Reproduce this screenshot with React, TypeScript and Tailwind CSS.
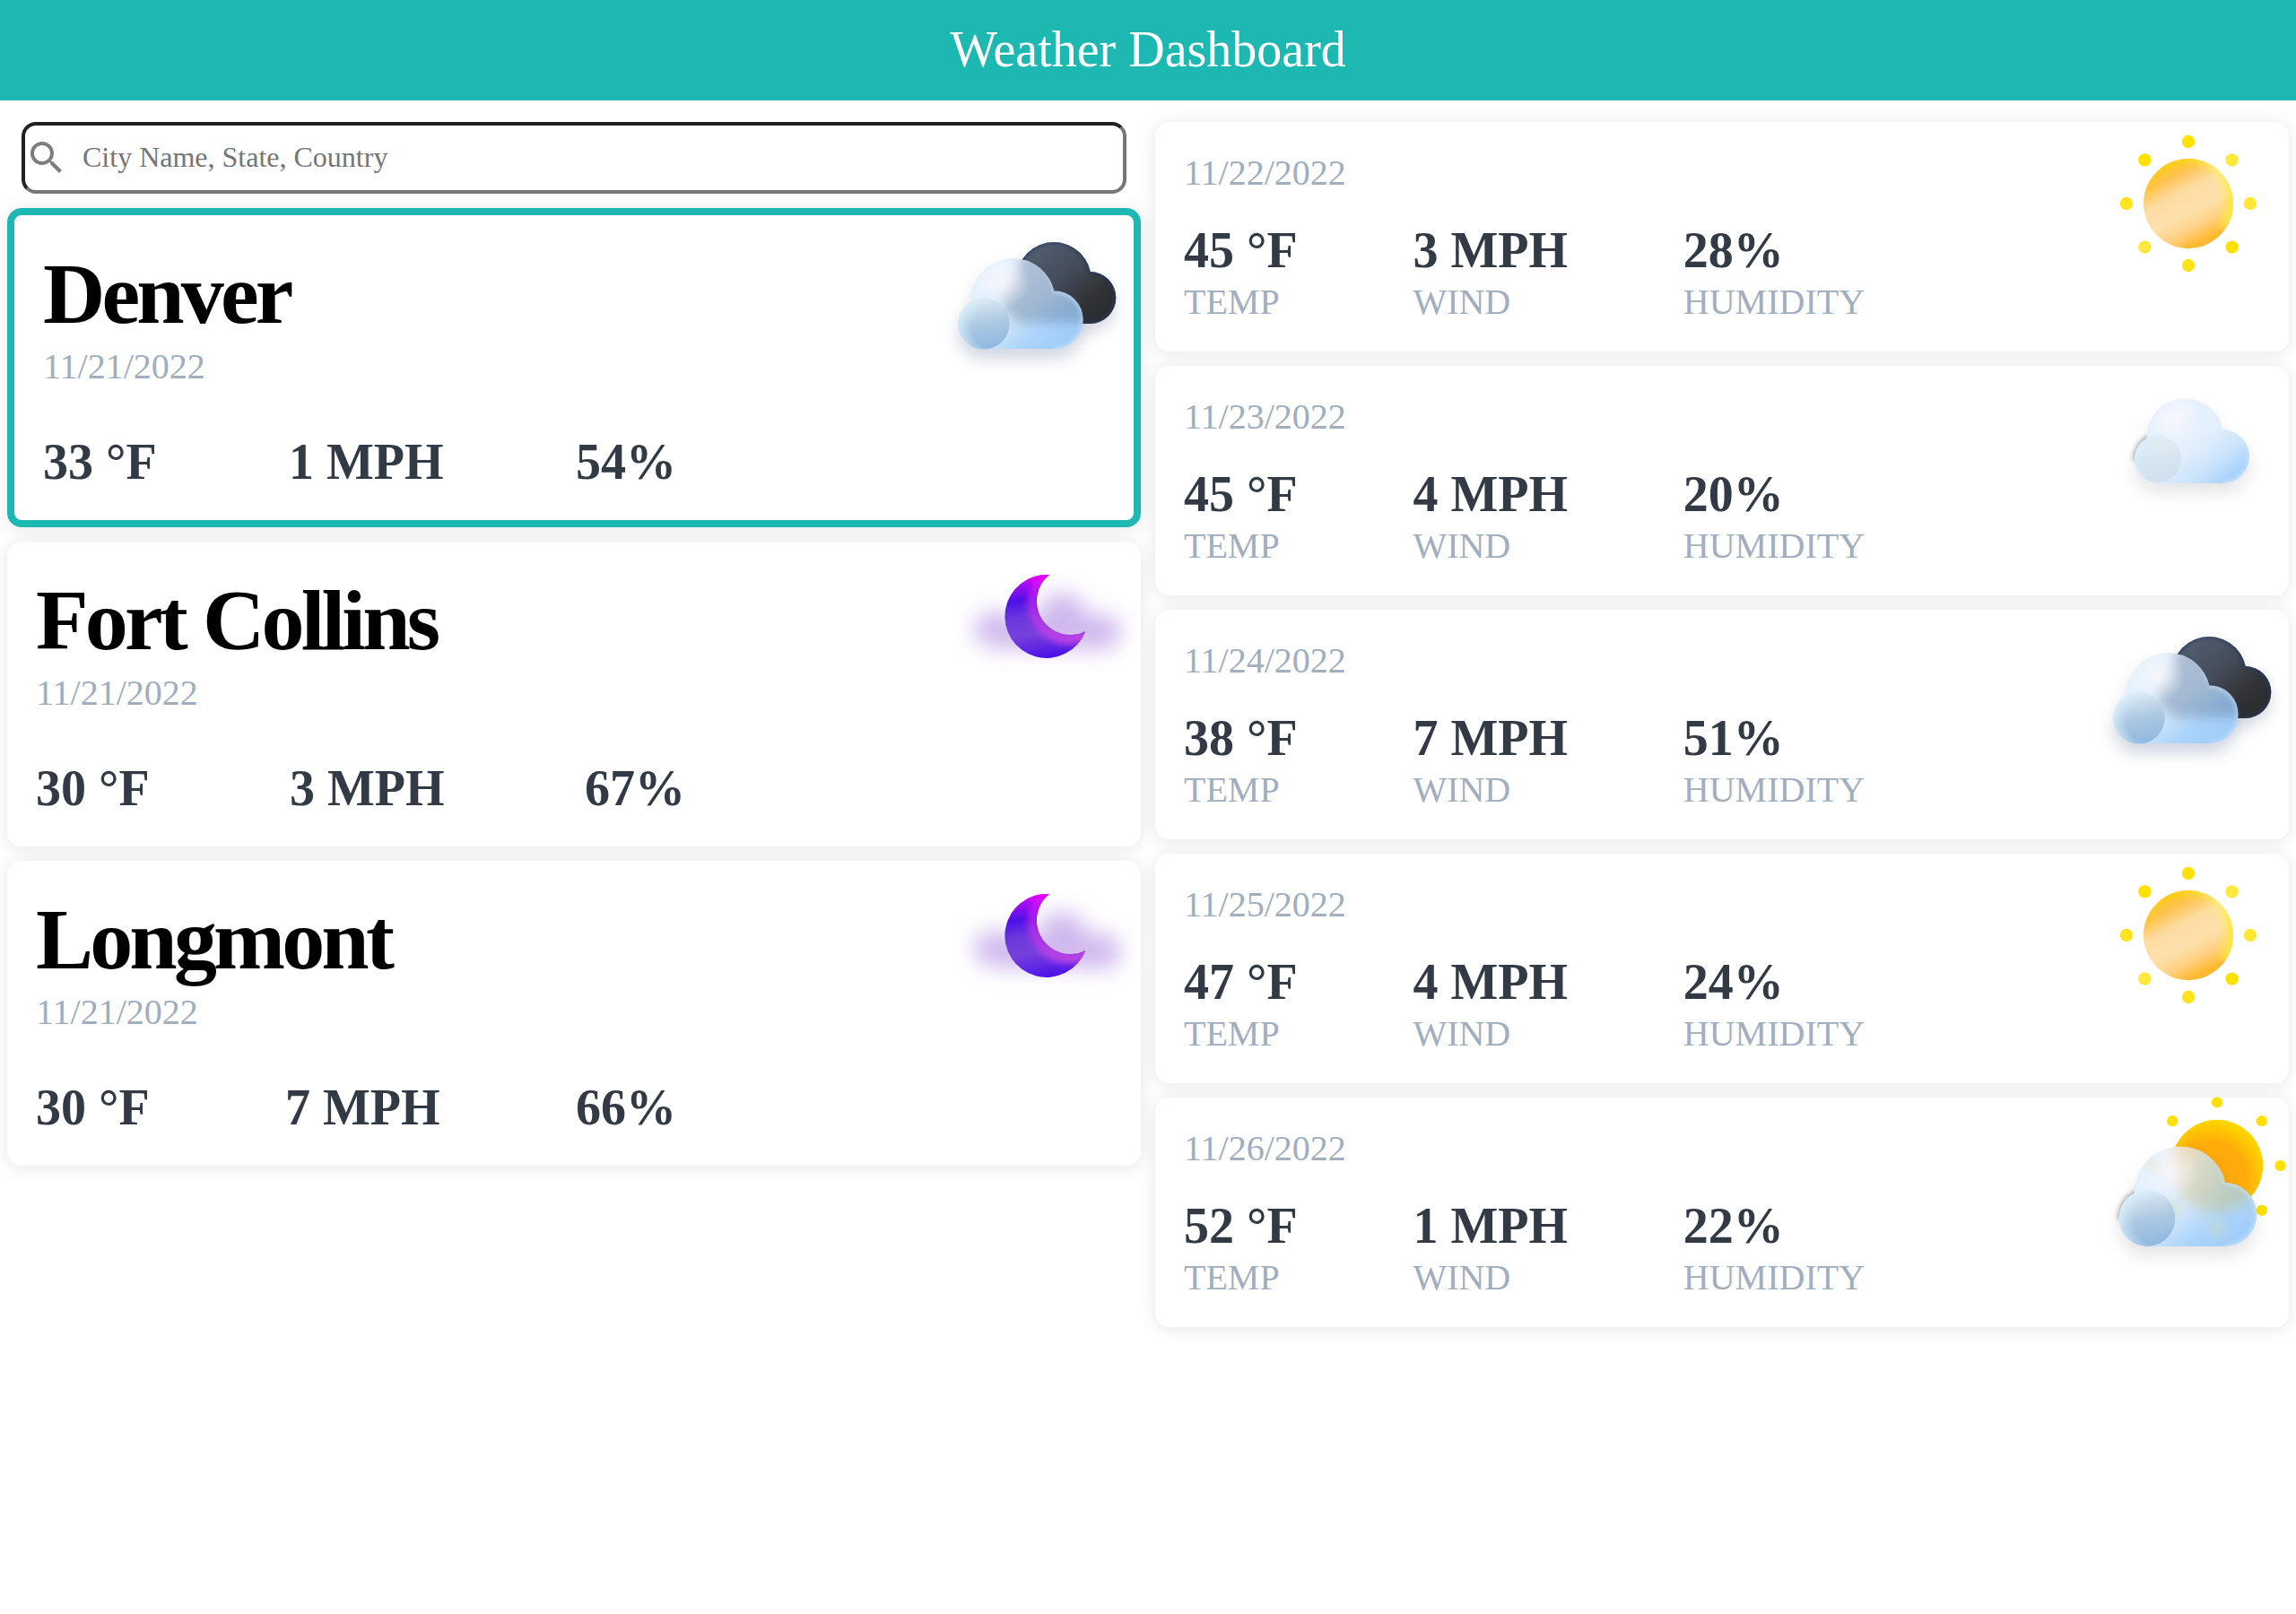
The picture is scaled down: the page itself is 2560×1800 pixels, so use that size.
import { useId, type ReactNode } from "react";
import { MdSearch } from "react-icons/md";

type Circle = [number, number, number];

interface Lobed {
  big: Circle;
  right: Circle;
  left: Circle;
}

function Lobes({ big, right, left, fill }: Lobed & { fill?: string }) {
  const base = right[1] + right[2];
  const top = big[1] + big[2] * 0.35;
  return (
    <>
      <circle cx={big[0]} cy={big[1]} r={big[2]} fill={fill} />
      <circle cx={right[0]} cy={right[1]} r={right[2]} fill={fill} />
      <path d={`M${left[0]} ${base}V${top + 12}L${big[0] - 10} ${top}H${right[0]}V${base}Z`} fill={fill} />
    </>
  );
}

function Icon({ children }: { children: ReactNode }) {
  return (
    <svg viewBox="0 0 200 200" className="absolute top-0 right-0 h-[200px] w-[200px] overflow-visible" aria-hidden="true">
      {children}
    </svg>
  );
}

function Dots({ cx, cy, d, diag, r, colors }: { cx: number; cy: number; d: number; diag: number; r: number; colors: string[] }) {
  const spots = [
    [0, -d],
    [diag, -diag],
    [d, 0],
    [diag, diag],
    [0, d],
    [-diag, diag],
    [-d, 0],
    [-diag, -diag],
  ];
  return (
    <>
      {spots.map(([x, y], i) => (
        <circle key={i} cx={cx + x} cy={cy + y} r={r} fill={colors[i % colors.length]} />
      ))}
    </>
  );
}

function SunIcon() {
  const id = useId();
  return (
    <Icon>
      <defs>
        <linearGradient id={id + "g"} gradientUnits="userSpaceOnUse" x1="62" y1="42" x2="112" y2="138">
          <stop offset="0" stopColor="#ffc51c" />
          <stop offset="0.19" stopColor="#ffc250" />
          <stop offset="0.38" stopColor="#fddca2" />
          <stop offset="0.6" stopColor="#fee0ac" />
          <stop offset="0.76" stopColor="#ffd184" />
          <stop offset="0.92" stopColor="#ffb930" />
        </linearGradient>
        <linearGradient id={id + "r"} gradientUnits="userSpaceOnUse" x1="40" y1="80" x2="138" y2="90">
          <stop offset="0" stopColor="#ffd000" stopOpacity="0.2" />
          <stop offset="0.4" stopColor="#ffd90c" />
          <stop offset="0.8" stopColor="#fff07a" />
          <stop offset="1" stopColor="#ffe63c" />
        </linearGradient>
        <clipPath id={id + "c"}>
          <circle cx="88" cy="91" r="50" />
        </clipPath>
        <filter id={id + "b"} x="-30%" y="-30%" width="160%" height="160%">
          <feGaussianBlur stdDeviation="5" />
        </filter>
      </defs>
      <circle cx="88" cy="91" r="50" fill={`url(#${id}g)`} />
      <g clipPath={`url(#${id}c)`}>
        <path d="M38 84A50 50 0 0 1 138 91Q138 106 130 118" fill="none" stroke={`url(#${id}r)`} strokeWidth="15" filter={`url(#${id}b)`} />
      </g>
      <Dots cx={88} cy={91} d={69} diag={48.6} r={7.2} colors={["#ffe205", "#ffe83c", "#ffe738", "#ffe100", "#ffe41c", "#ffe83c", "#ffe41c", "#ffe100"]} />
    </Icon>
  );
}

function MoonIcon() {
  const id = useId();
  const moon = "M98 37A46.5 46.5 0 1 0 138.3 100A37.6 37.6 0 0 1 98 37Z";
  return (
    <Icon>
      <defs>
        <linearGradient id={id + "g"} gradientUnits="userSpaceOnUse" x1="82" y1="38" x2="98" y2="130">
          <stop offset="0" stopColor="#c80cf4" />
          <stop offset="0.26" stopColor="#4c10e8" />
          <stop offset="0.46" stopColor="#6a38dc" />
          <stop offset="0.68" stopColor="#7640dc" />
          <stop offset="1" stopColor="#4c10e8" />
        </linearGradient>
        <linearGradient id={id + "r"} gradientUnits="userSpaceOnUse" x1="90" y1="36" x2="110" y2="110">
          <stop offset="0" stopColor="#f000ff" />
          <stop offset="0.4" stopColor="#b428ea" />
          <stop offset="1" stopColor="#d048e8" />
        </linearGradient>
        <clipPath id={id + "c"}>
          <path d={moon} />
        </clipPath>
        <filter id={id + "b"} x="-50%" y="-50%" width="200%" height="200%">
          <feGaussianBlur stdDeviation="4.5" />
        </filter>
        <filter id={id + "m"} x="-50%" y="-50%" width="200%" height="200%">
          <feGaussianBlur stdDeviation="12" />
        </filter>
      </defs>
      <g filter={`url(#${id}m)`} fill="#c5a8ea" opacity="0.82">
        <ellipse cx="39" cy="98" rx="25" ry="20" />
        <ellipse cx="112" cy="84" rx="27" ry="27" />
        <ellipse cx="153" cy="101" rx="25" ry="20" />
        <path d="M40 88H153V119H40Z" />
      </g>
      <path d={moon} fill={`url(#${id}g)`} />
      <g clipPath={`url(#${id}c)`}>
        <path d="M70 35L98 34A38 38 0 0 0 142 102" fill="none" stroke={`url(#${id}r)`} strokeWidth="10" filter={`url(#${id}b)`} />
      </g>
    </Icon>
  );
}

function FrontCloud({ shape, behind, pale, grain }: { shape: Lobed; behind?: ReactNode; pale?: boolean; grain?: boolean }) {
  const id = useId();
  const { big, right, left } = shape;
  const base = right[1] + right[2];
  return (
    <>
      <defs>
        <linearGradient id={id + "g"} gradientUnits="userSpaceOnUse" x1={big[0] - big[2] * 0.4} y1={big[1] - big[2] * 0.6} x2={right[0]} y2={base}>
          <stop offset="0" stopColor={pale ? "#e8f3fe" : "#e6f2fe"} />
          <stop offset="0.45" stopColor={pale ? "#e3effb" : "#d5e8fc"} />
          <stop offset="0.75" stopColor={pale ? "#cbe4fc" : "#add5fb"} />
          <stop offset="1" stopColor={pale ? "#a8d2fb" : "#a0cdf9"} />
        </linearGradient>
        <linearGradient id={id + "l"} gradientUnits="userSpaceOnUse" x1={left[0] - left[2] * 0.2} y1={left[1] - left[2]} x2={left[0] + left[2] * 0.2} y2={left[1] + left[2]}>
          <stop offset="0" stopColor={pale ? "#e8eff5" : "#e0eaf3"} />
          <stop offset="0.5" stopColor={pale ? "#d6e5f0" : "#adc9e2"} />
          <stop offset="1" stopColor={pale ? "#cfdfee" : "#8fb8e0"} />
        </linearGradient>
        <radialGradient id={id + "r"} gradientUnits="userSpaceOnUse" cx={left[0] + left[2] * 0.35} cy={left[1] + left[2] * 0.15} r={left[2] * 1.45}>
          <stop offset="0.55" stopColor="#cde8fa" stopOpacity="0" />
          <stop offset="1" stopColor="#dcf1fb" stopOpacity="0.95" />
        </radialGradient>
        <radialGradient id={id + "h"} gradientUnits="userSpaceOnUse" cx={big[0] - big[2] * 0.25} cy={big[1] - big[2] * 0.45} r={big[2] * 0.65}>
          <stop offset="0" stopColor="#f8f7fc" stopOpacity="0.95" />
          <stop offset="1" stopColor="#f8f7fc" stopOpacity="0" />
        </radialGradient>
        <clipPath id={id + "c"}>
          <Lobes {...shape} />
        </clipPath>
        <filter id={id + "b"} x="-50%" y="-50%" width="200%" height="200%">
          <feGaussianBlur stdDeviation="6.5" />
        </filter>
        <filter id={id + "e"} x="-50%" y="-50%" width="200%" height="200%">
          <feGaussianBlur stdDeviation="2.4" />
        </filter>
        <filter id={id + "s"} x="-50%" y="-50%" width="200%" height="200%">
          <feGaussianBlur stdDeviation="9" />
        </filter>
      </defs>
      <g filter={`url(#${id}s)`} opacity={grain ? 0.15 : 0.24} transform="translate(0 11)">
        <Lobes {...shape} fill={grain ? "#55556c" : "#3c5488"} />
        <circle cx={left[0]} cy={left[1]} r={left[2]} fill={grain ? "#55556c" : "#3c5488"} />
      </g>
      {grain && (
        <path
          d={`M${left[0] - left[2] + 1} ${left[1] + 2}A${left[2]} ${left[2]} 0 0 1 ${left[0] - 4} ${left[1] - left[2]}`}
          fill="none"
          stroke="#6a6a6a"
          strokeWidth="5"
          opacity="0.55"
          filter={`url(#${id}e)`}
        />
      )}
      <Lobes {...shape} fill={`url(#${id}g)`} />
      <g clipPath={`url(#${id}c)`}>
        {behind && <g filter={`url(#${id}b)`}>{behind}</g>}
        <circle cx={big[0]} cy={big[1]} r={big[2]} fill={`url(#${id}h)`} />
        <g fill="none" stroke="#d5ebff" strokeWidth="4" opacity="0.65" filter={`url(#${id}e)`}>
          <path d={`M${big[0] - big[2]} ${big[1]}A${big[2]} ${big[2]} 0 0 1 ${big[0] + big[2]} ${right[1] - right[2]}`} />
          <path d={`M${right[0]} ${right[1] - right[2]}A${right[2]} ${right[2]} 0 0 1 ${right[0]} ${base}`} />
        </g>
      </g>
      <circle cx={left[0]} cy={left[1]} r={left[2]} fill={`url(#${id}l)`} />
      <circle cx={left[0]} cy={left[1]} r={left[2]} fill={`url(#${id}r)`} />
    </>
  );
}

function CloudyIcon() {
  const id = useId();
  const dark: Lobed = { big: [111, 71.7, 41.7], right: [151.3, 92, 29], left: [84, 95, 26] };
  return (
    <Icon>
      <defs>
        <linearGradient id={id + "g"} gradientUnits="userSpaceOnUse" x1="92" y1="42" x2="150" y2="112">
          <stop offset="0" stopColor="#505b6c" />
          <stop offset="0.45" stopColor="#434b58" />
          <stop offset="0.8" stopColor="#333538" />
          <stop offset="1" stopColor="#2d2e30" />
        </linearGradient>
        <clipPath id={id + "c"}>
          <Lobes {...dark} />
        </clipPath>
        <filter id={id + "b"} x="-50%" y="-50%" width="200%" height="200%">
          <feGaussianBlur stdDeviation="2" />
        </filter>
        <filter id={id + "s"} x="-50%" y="-50%" width="200%" height="200%">
          <feGaussianBlur stdDeviation="8" />
        </filter>
      </defs>
      <g opacity="0.2" filter={`url(#${id}s)`} transform="translate(0 9)">
        <Lobes {...dark} fill="#3c4a70" />
      </g>
      <Lobes {...dark} fill={`url(#${id}g)`} />
      <g clipPath={`url(#${id}c)`}>
        <g fill="none" stroke="#22385f" strokeWidth="4" filter={`url(#${id}b)`}>
          <path d="M69.3 71.7A41.7 41.7 0 0 1 152 63A29 29 0 0 1 151.3 121" />
        </g>
      </g>
      <FrontCloud
        shape={{ big: [65.7, 95, 46.7], right: [111.3, 116.7, 32.3], left: [33, 120.7, 28.7] }}
        behind={
          <g opacity="0.34" fill="#425e80">
            <circle cx="111" cy="71.7" r="43" />
            <circle cx="82" cy="93" r="28" />
            <path d="M82 90H170V120H82Z" />
          </g>
        }
      />
    </Icon>
  );
}

function MildCloudIcon() {
  return (
    <Icon>
      <FrontCloud pale grain shape={{ big: [84.3, 79.3, 42.7], right: [126.3, 101, 29.7], left: [54, 104, 26] }} />
    </Icon>
  );
}

function PartlySunnyIcon() {
  const id = useId();
  return (
    <Icon>
      <defs>
        <radialGradient id={id + "g"} gradientUnits="userSpaceOnUse" cx="112" cy="90" r="66">
          <stop offset="0" stopColor="#ffa60c" />
          <stop offset="0.62" stopColor="#ffac0a" />
          <stop offset="1" stopColor="#ffd800" />
        </radialGradient>
        <linearGradient id={id + "w"} gradientUnits="userSpaceOnUse" x1="68" y1="76" x2="130" y2="110">
          <stop offset="0" stopColor="#f6d6ae" />
          <stop offset="0.35" stopColor="#dcd8c0" />
          <stop offset="1" stopColor="#b9c9b8" />
        </linearGradient>
      </defs>
      <circle cx="120" cy="76" r="51.2" fill={`url(#${id}g)`} />
      <Dots cx={120} cy={76} d={70.5} diag={49.8} r={6.1} colors={["#ffe000"]} />
      <FrontCloud
        grain
        shape={{ big: [79, 105.7, 51], right: [128.7, 130.5, 35.5], left: [42, 134.7, 31.3] }}
        behind={
          <g opacity="0.85">
            <circle cx="120" cy="76" r="52" fill={`url(#${id}w)`} />
            <Dots cx={120} cy={76} d={70.5} diag={49.8} r={7} colors={["#cfdcae"]} />
          </g>
        }
      />
    </Icon>
  );
}

const icons = { cloudy: CloudyIcon, sun: SunIcon, moon: MoonIcon, mild: MildCloudIcon, partly: PartlySunnyIcon };
type IconName = keyof typeof icons;

const cities: { name: string; temp: string; wind: string; humidity: string; icon: IconName; cols: string; selected?: boolean }[] = [
  { name: "Denver", temp: "33 °F", wind: "1 MPH", humidity: "54%", icon: "cloudy", selected: true, cols: "grid-cols-[274px_320px_auto]" },
  { name: "Fort Collins", temp: "30 °F", wind: "3 MPH", humidity: "67%", icon: "moon", cols: "grid-cols-[283px_329px_auto]" },
  { name: "Longmont", temp: "30 °F", wind: "7 MPH", humidity: "66%", icon: "moon", cols: "grid-cols-[278px_324px_auto]" },
];

const forecast: { date: string; temp: string; wind: string; humidity: string; icon: IconName }[] = [
  { date: "11/22/2022", temp: "45 °F", wind: "3 MPH", humidity: "28%", icon: "sun" },
  { date: "11/23/2022", temp: "45 °F", wind: "4 MPH", humidity: "20%", icon: "mild" },
  { date: "11/24/2022", temp: "38 °F", wind: "7 MPH", humidity: "51%", icon: "cloudy" },
  { date: "11/25/2022", temp: "47 °F", wind: "4 MPH", humidity: "24%", icon: "sun" },
  { date: "11/26/2022", temp: "52 °F", wind: "1 MPH", humidity: "22%", icon: "partly" },
];

function Stat({ value, label }: { value: string; label: string }) {
  return (
    <div>
      <p className="text-[56px] leading-16 font-bold text-[#323a46]">{value}</p>
      <p className="mt-[3px] text-[40px] leading-[46px] text-[#a0aec0]">{label}</p>
    </div>
  );
}

const shadow = "shadow-[0_2px_20px_rgba(0,0,0,0.1)]";

export default function App() {
  return (
    <div className="min-h-[1800px] bg-white font-['Liberation_Serif',serif]">
      <header className="flex h-28 items-center justify-center bg-[#1eb8b2] pb-[2px]">
        <h1 className="text-[56px] leading-16 text-white">Weather Dashboard</h1>
      </header>
      <main className="grid grid-cols-2 gap-4 px-2 pt-6">
        <section className="flex flex-col gap-4">
          <div className="relative mx-4">
            <input
              type="text"
              placeholder="City Name, State, Country"
              className="block h-20 w-full rounded-2xl border-4 border-[#767676] bg-white pb-[2px] pl-16 text-[32px] text-black [border-style:inset] placeholder:text-[#757575]"
            />
            <MdSearch className="absolute top-4 left-1 h-12 w-12 text-[#7d7d7d]" />
          </div>
          {cities.map((c) => {
            const Pic = icons[c.icon];
            return (
              <article
                key={c.name}
                className={`relative rounded-2xl bg-white px-8 pt-[33px] pb-[33px] ${shadow} ${c.selected ? "border-8 border-[#1eb8b2]" : ""}`}
              >
                <h2 className="text-[96px] leading-[110px] font-bold tracking-[-3.84px] text-black">{c.name}</h2>
                <p className="mt-[3px] text-[40px] leading-[46px] text-[#a0aec0]">11/21/2022</p>
                <div className={`mt-[51px] grid text-[56px] leading-16 font-bold text-[#323a46] ${c.cols}`}>
                  <span>{c.temp}</span>
                  <span>{c.wind}</span>
                  <span>{c.humidity}</span>
                </div>
                <Pic />
              </article>
            );
          })}
        </section>
        <section className="flex flex-col gap-4">
          {forecast.map((f) => {
            const Pic = icons[f.icon];
            return (
              <article key={f.date} className={`relative h-64 rounded-2xl bg-white px-8 pt-[34px] ${shadow}`}>
                <p className="text-[40px] leading-[46px] text-[#a0aec0]">{f.date}</p>
                <div className="mt-[31px] flex gap-[128.8px]">
                  <Stat value={f.temp} label="TEMP" />
                  <Stat value={f.wind} label="WIND" />
                  <Stat value={f.humidity} label="HUMIDITY" />
                </div>
                <Pic />
              </article>
            );
          })}
        </section>
      </main>
    </div>
  );
}
